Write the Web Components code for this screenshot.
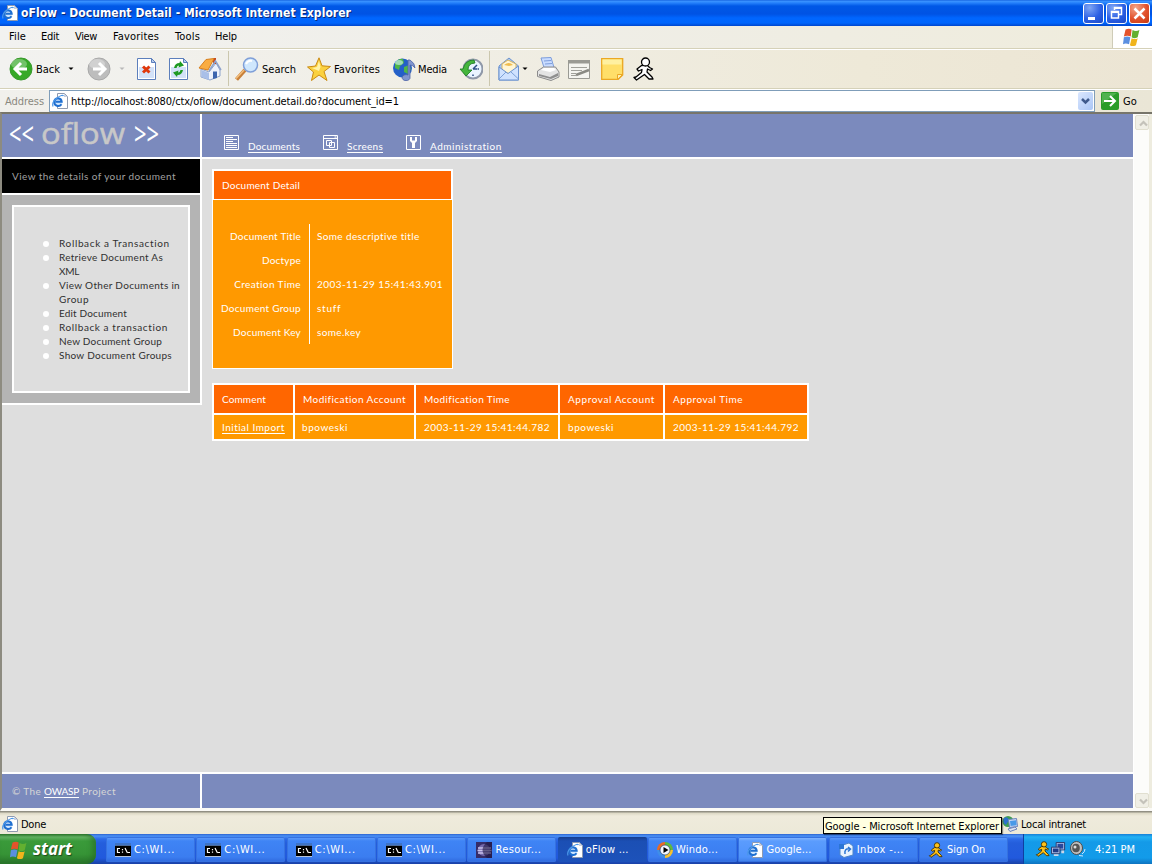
<!DOCTYPE html>
<html lang="en">
<head>
<meta charset="utf-8">
<title>oFlow - Document Detail</title>
<style>
html,body{margin:0;height:100%;overflow:hidden}
body{font:11px "DejaVu Sans Condensed","DejaVu Sans",sans-serif;font-stretch:condensed;color:#000;background:#ece9d8}
</style>
</head>
<body>
<desktop-screen></desktop-screen>
<script>
const fits = [];
function define(name, css, html) {
  const t = document.createElement('template');
  t.innerHTML = `<style>:host{display:block;box-sizing:border-box}*{box-sizing:border-box}${css}</style>${html}`;
  customElements.define(name, class extends HTMLElement {
    constructor() { super(); this.attachShadow({mode: 'open'}).append(t.content.cloneNode(true)); }
  });
}

/* Text run set to a given width: by tracking, or by stretching the glyphs. */
customElements.define('fit-text', class extends HTMLElement {
  constructor() {
    super();
    this.attachShadow({mode: 'open'}).innerHTML =
      '<style>:host{display:inline-block;white-space:pre;flex:none}span{display:inline-block;transform-origin:0 50%}:host([u]) span{text-decoration:underline;text-decoration-thickness:1px;text-underline-offset:2px;text-decoration-skip-ink:none}</style><span><slot></slot></span>';
    fits.push(this);
  }
  fit() {
    const s = this.shadowRoot.querySelector('span'), w = +this.getAttribute('w');
    const n = s.getBoundingClientRect().width;
    if (!w || !n) return;
    if (this.hasAttribute('stretch')) s.style.transform = `scaleX(${w / n})`;
    else s.style.letterSpacing = (w - n) / this.textContent.length + 'px';
    this.style.width = w + 'px';
  }
});

const circle = (a, b, c) => `<circle cx="12" cy="12" r="11" fill="${b}" stroke="${a}"/><ellipse cx="10" cy="7" rx="8" ry="5" fill="#fff" opacity=".3"/>${c}`;
const flag = '<path fill="#e4532b" d="M3 3q4-2 7 0L9 11Q5 9 1 11z"/><path fill="#63b030" d="M11 3.500q4 2 8 0L17 12q-4 2-7 0z"/><path fill="#5a8fe0" d="M1 12q4-2 7.500 0L7 20q-4-2-7 0z"/><path fill="#f0b41c" d="M10 13q4 2 7 0l-2 8q-4 2-7 0z"/>';
const sheet = '<path fill="#fff" stroke="#5c7fbc" d="M3.500 1.500h14l4 4v17h-18z"/><path fill="#d3e2f8" d="M5 10h15v11H5z"/><path fill="#b6cdf0" stroke="#5c7fbc" d="M17.500 1.500v4h4z"/>';
const iePage = '<path fill="#fff" stroke="#8f9aaf" d="M5.500.5h7l3 3v12h-10z"/><path fill="#c5cfe0" d="M12 .5v3.500h3.500z"/><circle cx="6" cy="9" r="4.300" fill="#cfe6ff"/><path fill="none" stroke="#1f6fd0" stroke-width="2" d="M9.500 11.300q-1.500 2.200-4 1.700Q2.200 12.200 2.200 9T6 5.200q3.500.2 3.700 3.600H3.500"/><path fill="none" stroke="#4b97e8" stroke-width="1.200" d="M1 13.500Q-.5 9 5 5t6.500-2"/>';
const runner = (f, s) => `<g fill="${f}" stroke="${s}" stroke-width="1.300" stroke-linejoin="round"><path d="M9.500 8.500 5 12l1.500 2 3.500-1.500-.5 3L4 20l-2 .5 2.500 2.500 8-5.500L17 22h4l-1-2-5-5 .5-3 3 1.500 2-1.500-3-1.500-2.500-2.500z"/><circle cx="13.500" cy="5" r="4"/></g>`;
const cmd = '<path fill="#b6c5dc" d="M0 1h16v14H0z"/><path d="M0 3.500h16V14H0z"/><path fill="#3e74c8" d="M0 1h16v2.500H0z"/><path d="M5 6.500H2.500v4H5M7.500 7v1.200M7.500 9.500v1.200M10 6l2.500 5M13 10.500h2" fill="none" stroke="#fff" stroke-width="1.200"/>';
const icons = {
  back: [24, circle('#3a9a2e', '#36a927', '<path d="M18 12H7m5-6-6 6 6 6" fill="none" stroke="#fff" stroke-width="3"/>')],
  fwd: [24, circle('#a9a9a9', '#bdbdbd', '<path d="M6 12h11m-5-6 6 6-6 6" fill="none" stroke="#fff" stroke-width="3"/>')],
  stop: [24, sheet + '<path d="m9 9.500 6.500 6m0-6-6.500 6" stroke="#e0380c" stroke-width="3"/>'],
  refresh: [24, sheet + '<path d="M8 11q1-5 5.500-5l.5-2 4 4.500-5.500 2 .5-2q-2 0-2.500 2.500zM17 13q-1 5-5.500 5l-.5 2-4-4.500 5.500-2-.5 2q2 0 2.500-2.500z" fill="#1e9a22"/>'],
  home: [24, '<path fill="#eef2fb" stroke="#8ea3cb" d="m3 12 8 3 7-9 4 7v6l-10 4L3 20z"/><path fill="#a9bfe8" d="m3.500 13 7.500 3v7l-7.500-3z"/><path fill="#c8481e" d="M15 1h3v6h-3z"/><path fill="#f9ac42" stroke="#d77f1e" d="M1 11 8 2.500l8-1-6 11.500z"/><path fill="none" stroke="#8ea3cb" stroke-width="1.500" d="m11 14 6.500-10 5.500 9"/><path fill="#3d65ae" d="M15 14.500h4V21l-4 1z"/>'],
  search: [24, '<path d="m10 13-8.500 9.500" stroke="#c8803a" stroke-width="4"/><path d="m9 13-8 8.500" stroke="#f3be7c" stroke-width="1.500"/><circle cx="15.500" cy="8" r="7" fill="#cfe7fd" stroke="#7f9fd8" stroke-width="1.500"/><path d="M11 7q2-4 6-3" fill="none" stroke="#fff" stroke-width="2"/>'],
  star: [24, '<path fill="#fbd13f" stroke="#ca8a13" stroke-linejoin="round" d="m12 .8 3 8 8.500.7-6.500 5 3 9L12 18l-7.500 5.500 2-8.500-6-5 8-1z"/><path fill="#fff3a8" d="m12 4 1.500 6L12 14l-7-3 5-1z"/>'],
  media: [24, '<circle cx="10.500" cy="11" r="9.500" fill="#2460c8"/><path fill="#4fb648" d="M3 6q4-5 8-4l1 4-4 3-1 4-4-2zm9 4 5-2 2 4-3 5-4-2z"/><ellipse cx="7" cy="5.500" rx="4" ry="2.500" fill="#d8f2ff" opacity=".6"/><path fill="#8095cf" stroke="#4e65a6" stroke-width=".8" d="M16 3h2q5 3 5 8-2-3-5-3v12a4 3 0 1 1-2-2z"/>'],
  history: [24, '<circle cx="14" cy="12" r="9.500" fill="#eaf4ff" stroke="#8f98a8" stroke-width="2"/><path d="M14 5v1.500M20 12h-1.500M14 19v-1.500m0-5.500 4-4m-4 4h4" stroke="#2d4f88" stroke-width="1.500"/><path fill="#45b53c" stroke="#187a20" stroke-width=".8" d="M1 12h3q2-9 11-9l1 3q-7 0-7 7h4l-6 6z"/>'],
  mail: [24, '<path fill="#a7c9f4" stroke="#6b92cf" d="m2 9 10-8 9.500 8v14H2z"/><path fill="#fff6d5" stroke="#d9b55c" d="M5 13V7l6-4 8 4v6l-7 4z"/><path fill="#f0bd4e" d="M7 8q5-4 9 0l-4 1z"/><path fill="#cfe2ff" stroke="#6b92cf" d="m2 10 9 6.500L21.500 9v14H2z"/><path fill="none" stroke="#7da2d8" d="m2 22 7-7m12.500 7L14 15"/>'],
  printer: [24, '<path fill="#c9dcff" stroke="#7d9ddb" d="m5 1 10-.5 3 10H8z"/><path stroke="#7d9ddb" d="m8 4 7-.5M9 7l7-.5"/><path fill="#e4e4e4" stroke="#8b8b8b" d="m1.500 14 6-4h12l3.500 5v5l-8 3.500-13.500-4z"/><path fill="#8f8f8f" d="m3 17 11 3 8-4v3l-7 3-12-3z"/><path fill="#fff" d="m5 13 3-2h10l2 2-6 2z"/>'],
  edit: [24, '<path fill="#f4f4f0" stroke="#9a9a94" d="M1.500 3.500h21v18h-21z"/><path fill="#9a9a94" d="M1 3h22v3.500H1z"/><path stroke="#a0a09a" d="M4 10.500h16M4 13.500h11M4 16.500h5M4 18.500h5"/><path d="m9 18 13-5" stroke="#8a8a84" stroke-width="2.500"/>'],
  note: [24, '<path fill="#ffdf69" stroke="#eba824" stroke-width="1.300" d="M1.700 1.700h21V18l-4.500 4.300H1.700z"/><path fill="#fff0a0" d="M2.500 2.500h19v5h-19z"/><path fill="#fff1b0" stroke="#eba824" d="M22.500 17.500h-5v5z"/>'],
  aim: [24, runner('#fff', '#000')],
  aimy: [24, runner('#ffc21a', '#3c2c00')],
  flag: [22, flag], ie: [16, iePage], cmd: [16, cmd],
  ball: [16, '<path fill="#362c68" d="M0 0h16v16H0z"/><circle cx="8" cy="8" r="6" fill="#7469ac"/><path stroke="#c9c2ec" stroke-width="1.300" d="M2 6h13M1.500 8.500h14M2 11h13"/><path fill="#1c1440" d="M10 0h6v16h-5q-9-8 0-16z" opacity=".6"/>'],
  wmp: [16, '<path fill="#e86a25" d="M8 0a8 8 0 0 0-8 8h8z"/><path fill="#3f8ee8" d="M0 8a8 8 0 0 0 8 8V8z"/><path fill="#5fba3c" d="M8 0a8 8 0 0 1 8 8H8z"/><path fill="#f8c32c" d="M16 8a8 8 0 0 1-8 8V8z"/><circle cx="8" cy="8" r="5" fill="#f2f6ff" stroke="#28456e" stroke-width=".7"/><path d="m6.500 5 5 3-5 3z"/>'],
  inbox: [16, '<path fill="#e8f3ff" stroke="#4f86ca" d="m2 4 9-3 4 3v9l-9 2.500L2 13z"/><path fill="#2b75d4" d="M1 2h5v5H1z"/><path stroke="#2b75d4" fill="none" stroke-width="1.500" d="M7 12q-1-6 5-5m-2-2 2.500 2L10 9.500"/>'],
  zone: [16, '<circle cx="6" cy="5.500" r="5.500" fill="#3f9d51"/><path fill="#2d70cc" d="M2 2q4-2 5 2L4 9Q0 7 2 2z"/><path fill="#c9d8f4" stroke="#6a83bc" d="m6.500 3.500 8-1 1 8-8 1z"/><path fill="#4799e8" d="m8 5 6-.7.6 5-6 .7z"/><path fill="#dde4f0" stroke="#6a83bc" d="m6 13 7-2 2 2-7 2.500z"/>'],
  net: [16, '<path fill="#a4b8e4" stroke="#29396c" d="M5.500.5h9v8h-9z"/><path fill="#27489d" d="M7 2h6v5H7z"/><path fill="#b3c2e8" stroke="#29396c" d="M.5 5.500h9v7h-9z"/><path fill="#203b86" d="M2 7h6v4H2z"/><path fill="#cdd5e6" d="M3 13h5v2H3zm8-4h3v3h-3z"/>'],
  vol: [16, '<ellipse cx="6.500" cy="7" rx="6" ry="6.500" fill="#c0c0c0" stroke="#4c4c4c"/><ellipse cx="6" cy="7" rx="3.800" ry="4.300" fill="#555"/><circle cx="5" cy="6" r="1.500" fill="#ddd"/><path stroke="#cfe5ff" fill="none" d="M12 13q3-2 3-5M9 14.500l4 .5"/>'],
  go: [18, '<rect width="18" height="18" rx="2" fill="#2a9c28"/><path fill="#6cc268" d="M1 1h15L1 12z" opacity=".6"/><path d="M3 9h10M9 4l5 5-5 5" fill="none" stroke="#fff" stroke-width="2"/>'],
  doc: [15, '<path fill="none" stroke="#fff" d="M.5.5h14v14H.5zM2 2.500h7M2 4.500h11M2 6.500h7M2 8.500h11M2 10.500h11M2 12.500h11"/>'],
  scr: [15, '<path fill="none" stroke="#fff" d="M.5.5h14v14H.5zM0 3.500h15M11.500 2h2M3.500 5.500h5v5h-5zM6.500 7.500h5v5h-5z"/>'],
  adm: [15, '<path fill="none" stroke="#fff" d="M.5.5h14v14H.5z"/><path fill="#fff" d="M4 2v4l2 2v5h3V8l2-2V2H9v3.500H6V2z"/>'],
  min: [21, '<path stroke="#fff" stroke-width="3" d="M5 15.500h7"/>'],
  max: [21, '<path fill="none" stroke="#fff" stroke-width="1.500" d="M8.500 7V4.500h7v7H13"/><path stroke="#fff" stroke-width="2" d="M8 5h8M5 9h8"/><path fill="none" stroke="#fff" stroke-width="1.500" d="M5.500 8.500h7v6.500h-7z"/>'],
  close: [21, '<path stroke="#fff" stroke-width="2.500" d="m5.500 5.500 10 10m0-10-10 10"/>'],
  down: [6, '<path d="M.5 1.500h5L3 4z"/>'], downg: [6, '<path fill="#b8b8b8" d="M.5 1.500h5L3 4z"/>'],
  chev: [15, '<path d="m4 5 3.500 3.500L11 5" fill="none" stroke="#3f5a8c" stroke-width="2.500"/>'],
  sup: [15, '<path d="m4 9.500 3.500-3.500L11 9.500" fill="none" stroke="#c4c2ba" stroke-width="2.200"/>'],
  sdn: [15, '<path d="m4 5.500 3.500 3.500L11 5.500" fill="none" stroke="#c4c2ba" stroke-width="2.200"/>']
};
customElements.define('x-icon', class extends HTMLElement {
  constructor() {
    super();
    const [n, d] = icons[this.getAttribute('name')];
    const s = +this.getAttribute('size') || n;
    this.attachShadow({mode: 'open'}).innerHTML =
      `<style>:host{display:block;flex:none;width:${s}px;height:${s}px}svg{display:block}</style><svg width="${s}" height="${s}" viewBox="0 0 ${n} ${n}">${d}</svg>`;
  }
});

define('window-title', `
 :host{height:26px;display:flex;align-items:center;padding:0 2px 0 2px;background:linear-gradient(#0b57d9,#3d95ff 1px,#2480fb 3px,#0058e6 6px,#0053e4 14px,#0066ff 18px,#0065fc 23px,#0046cd 26px);color:#fff}
 b{flex:1;font:bold 12px/27px "DejaVu Sans Condensed";font-stretch:condensed;padding-left:3px;text-shadow:1px 1px #0a2a78}
 i{width:21px;height:21px;margin-left:2px;border:1px solid #fff;border-radius:3px;background:radial-gradient(circle at 30% 20%,#7fa6f4,#2c60e4 55%,#1c49c6);display:flex;align-items:center;justify-content:center}
 i:last-child{background:radial-gradient(circle at 30% 20%,#f2a588,#e2512b 55%,#c63a12)}`,
 `<x-icon name="ie"></x-icon><b><fit-text w="330">oFlow - Document Detail - Microsoft Internet Explorer</fit-text></b>
 <i><x-icon name="min"></x-icon></i><i><x-icon name="max"></x-icon></i><i><x-icon name="close"></x-icon></i>`);

define('menu-bar', `
 :host{height:24px;display:flex;line-height:21px;padding-left:9px;background:linear-gradient(90deg,#f2f2f0,#efeee8 45%,#efecdc);border-bottom:1px solid #fff;box-shadow:inset 0 -1px #d5d1b8}
 fit-text{margin-right:var(--g)}
 div{margin-left:auto;width:40px;height:22px;background:#fff;border-left:1px solid #cfccb8;padding:1px 0 0 10px}`,
 `<fit-text w="17" style="--g:15px">File</fit-text><fit-text w="18" style="--g:16px">Edit</fit-text><fit-text w="22" style="--g:16px">View</fit-text><fit-text w="46" style="--g:16px">Favorites</fit-text><fit-text w="25" style="--g:15px">Tools</fit-text><fit-text w="22">Help</fit-text><div><x-icon name="flag" size="19"></x-icon></div>`);

define('tool-bar', `
 :host{height:40px;display:flex;align-items:center;padding:0 0 2px 9px;background:linear-gradient(90deg,#f2f2f0,#f0eee5 40%,#eee9d8 75%,#ece5d4);border-bottom:1px solid #fff;box-shadow:inset 0 -1px #d5d1b8}
 x-icon,fit-text,hr{margin:0 0 0 var(--g,0)}fit-text{padding-top:1px}
 hr{width:1px;height:35px;border:0;background:#cbc7ae;flex:none}`,
 `<x-icon name="back"></x-icon><fit-text w="24" style="--g:3px">Back</fit-text><x-icon name="down" style="--g:8px"></x-icon>
 <x-icon name="fwd" style="--g:13px"></x-icon><x-icon name="downg" style="--g:8px"></x-icon>
 <x-icon name="stop" style="--g:9px"></x-icon><x-icon name="refresh" style="--g:8px"></x-icon><x-icon name="home" style="--g:8px"></x-icon>
 <hr style="--g:6px"><x-icon name="search" style="--g:6px"></x-icon><fit-text w="34" style="--g:3px">Search</fit-text>
 <x-icon name="star" style="--g:11px"></x-icon><fit-text w="46" style="--g:3px">Favorites</fit-text>
 <x-icon name="media" style="--g:12px"></x-icon><fit-text w="29" style="--g:2px">Media</fit-text>
 <x-icon name="history" style="--g:12px"></x-icon><hr style="--g:6px">
 <x-icon name="mail" style="--g:7px"></x-icon><x-icon name="down" style="--g:1px"></x-icon><x-icon name="printer" style="--g:8px"></x-icon>
 <x-icon name="edit" style="--g:7px"></x-icon><x-icon name="note" style="--g:9px"></x-icon><x-icon name="aim" style="--g:8px"></x-icon>`);

define('address-bar', `
 :host{height:22px;display:flex;background:linear-gradient(90deg,#f1f0ec,#eae6d6);line-height:23px}
 .l{color:#8a887e;padding-left:5px;width:49px}
 .b{width:1046px;height:22px;border:1px solid #7f9db9;background:#fff;display:flex;align-items:center}
 .b fit-text{margin-left:3px;padding-top:1px}.c{margin:0 1px 0 auto;width:15px;height:18px;border-radius:2px;background:linear-gradient(135deg,#dbe7fe,#aac6f6);padding-top:2px}
 .g{margin:2px 3px 0 6px}`,
 `<div class="l"><fit-text w="39">Address</fit-text></div><div class="b"><x-icon name="ie" style="margin-left:2px"></x-icon><fit-text w="328">http://localhost:8080/ctx/oflow/document.detail.do?document_id=1</fit-text><div class="c"><x-icon name="chev"></x-icon></div></div><x-icon class="g" name="go"></x-icon><fit-text w="14" style="margin-left:1px">Go</fit-text>`);

define('oflow-logo', `
 :host{width:198px;height:43px;display:flex;padding-left:7px;color:#fff;font:30px/40px "Noto Sans",sans-serif}
 .n{font-size:30px;line-height:37px;color:#c8c8c8;font-family:"Open Sans",sans-serif;margin:0 9px 0 7px;-webkit-text-stroke:.5px #c8c8c8}`,
 `<fit-text w="25" stretch>&lt;&lt;</fit-text><fit-text class="n" w="84" stretch>oflow</fit-text><fit-text w="25" stretch>&gt;&gt;</fit-text>`);

define('nav-link', `
 :host{display:flex;align-items:flex-start}
 span{margin:3px 0 0 9px;line-height:16px}`,
 `<slot name="icon"></slot><span><slot></slot></span>`);

define('page-header', `
 :host{height:45px;display:flex;background:#7b8abd;border-bottom:2px solid #fff;color:#fff}
 nav{flex:1;border-left:2px solid #fff;display:flex;padding:21px 0 0 22px}`,
 `<oflow-logo></oflow-logo><nav>
 <nav-link><x-icon slot="icon" name="doc"></x-icon><fit-text u w="52">Documents</fit-text></nav-link>
 <nav-link style="margin-left:23px"><x-icon slot="icon" name="scr"></x-icon><fit-text u w="36">Screens</fit-text></nav-link>
 <nav-link style="margin-left:23px"><x-icon slot="icon" name="adm"></x-icon><fit-text u w="72">Administration</fit-text></nav-link></nav>`);

define('side-panel', `
 :host{width:200px;height:246px;border-right:2px solid #fff;border-bottom:2px solid #fff;background:#b4b4b4;flex:none}
 p{margin:0;height:36px;background:#000;border-bottom:2px solid #fff;color:#a0a0a0;line-height:35px;padding-left:10px}
 .x{margin:10px 10px 0;height:188px;border:2px solid #fff;background:#dedede;padding:29px 0 0 45px;color:#303030}
 ul{margin:0;padding:0;list-style:none}li{display:flex;flex-direction:column;align-items:flex-start;line-height:14px;position:relative}
 li::before{content:"";position:absolute;left:-16px;top:5px;width:6px;height:6px;border-radius:3px;background:#fff}`,
 `<p><fit-text w="164">View the details of your document</fit-text></p><div class="x"><ul>
 <li><fit-text w="111">Rollback a Transaction</fit-text></li>
 <li><fit-text w="104">Retrieve Document As</fit-text><fit-text w="20">XML</fit-text></li>
 <li><fit-text w="121">View Other Documents in</fit-text><fit-text w="30">Group</fit-text></li>
 <li><fit-text w="68">Edit Document</fit-text></li><li><fit-text w="109">Rollback a transaction</fit-text></li>
 <li><fit-text w="103">New Document Group</fit-text></li><li><fit-text w="113">Show Document Groups</fit-text></li></ul></div>`);

define('detail-card', `
 :host{width:241px;height:200px;background:#fff;color:#fff;display:flex;flex-direction:column}
 h1{font:inherit;margin:2px 2px 1px;height:28px;background:#f60;line-height:29px;padding-left:8px}
 dl{margin:0 1px;flex:none;height:168px;background:#f90;padding:24px 0;display:grid;grid-template-columns:97px 1fr;grid-auto-rows:24px;line-height:25px}
 dt{text-align:right;padding-right:8px;border-right:1px solid #fff}dd{margin:0;padding-left:7px}`,
 `<h1><fit-text w="78">Document Detail</fit-text></h1><dl>
 <dt><fit-text w="71">Document Title</fit-text></dt><dd><fit-text w="103">Some descriptive title</fit-text></dd>
 <dt><fit-text w="39">Doctype</fit-text></dt><dd></dd>
 <dt><fit-text w="67">Creation Time</fit-text></dt><dd><fit-text w="126">2003-11-29 15:41:43.901</fit-text></dd>
 <dt><fit-text w="80">Document Group</fit-text></dt><dd><fit-text w="24">stuff</fit-text></dd>
 <dt><fit-text w="68">Document Key</fit-text></dt><dd><fit-text w="44">some.key</fit-text></dd></dl>`);

define('history-table', `
 :host{margin-top:14px;width:597px;height:58px;padding:2px;background:#fff;color:#fff;display:grid;grid-template-columns:79px 119px 142px 103px 142px;grid-template-rows:28px 24px;gap:2px}
 div{background:#f90;padding-left:8px;line-height:25px}.h{background:#f60;line-height:29px}`,
 `<div class="h"><fit-text w="44">Comment</fit-text></div><div class="h"><fit-text w="103">Modification Account</fit-text></div><div class="h"><fit-text w="86">Modification Time</fit-text></div><div class="h"><fit-text w="87">Approval Account</fit-text></div><div class="h"><fit-text w="70">Approval Time</fit-text></div>
 <div><fit-text u w="63">Initial Import</fit-text></div><div style="padding-left:7px"><fit-text w="46">bpoweski</fit-text></div><div><fit-text w="126">2003-11-29 15:41:44.782</fit-text></div><div><fit-text w="46">bpoweski</fit-text></div><div><fit-text w="126">2003-11-29 15:41:44.792</fit-text></div>`);

define('page-footer', `
 :host{height:36px;display:flex;background:#7b8abd;border-top:2px solid #fff;color:#d6d6d6;line-height:35px}
 div{width:200px;border-right:2px solid #fff;padding-left:10px;white-space:nowrap}fit-text[u]{color:#fff}`,
 `<div><fit-text w="32">© The </fit-text><fit-text u w="35">OWASP</fit-text><fit-text w="37"> Project</fit-text></div>`);

define('scroll-bar', `
 :host{width:18px;background:#fcfcfa;border-right:3px solid #eeecdf;display:flex;flex-direction:column;justify-content:space-between;padding:1px 0 0}
 i{height:15px;width:14px;margin-left:1px;background:#f0efe6;border:1px solid #e1dfd0;border-radius:2px;display:grid;place-items:center}`,
 `<i><x-icon name="sup"></x-icon></i><i><x-icon name="sdn"></x-icon></i>`);

define('page-view', `
 :host{height:699px;display:flex;border-top:2px solid #77756a;border-left:2px solid #8d8b80;border-bottom:3px solid #fbfaf6;font:10px Lato,"Noto Sans",sans-serif;font-stretch:normal}
 .p{width:1132px;display:flex;flex-direction:column;background:#dedede;border-right:1px solid #fff}.m{flex:1;display:flex}.c{padding:10px 0 0 10px}`,
 `<div class="p"><page-header></page-header><div class="m"><side-panel></side-panel><div class="c"><detail-card></detail-card><history-table></history-table></div></div><page-footer></page-footer></div><scroll-bar></scroll-bar>`);

define('status-bar', `
 :host{height:23px;display:flex;align-items:center;background:linear-gradient(#918f83 1px,#dcd8c4 2px,#efebdc 5px,#ece9d8);padding:2px 0 0 2px;position:relative}
 .t{position:absolute;left:823px;top:6px;height:17px;width:179px;border:1px solid #000;background:#ffffe1;line-height:17px;padding-left:1px;box-shadow:1px 1px 1px #0006;z-index:2}
 .z{margin-left:auto;width:150px;display:flex;align-items:center}.z fit-text{margin-left:3px}`,
 `<x-icon name="ie"></x-icon><fit-text w="25" style="margin:1px 0 0 3px">Done</fit-text><div class="z"><x-icon name="zone"></x-icon><fit-text w="65" style="margin-top:1px">Local intranet</fit-text></div>
 <div class="t"><fit-text w="174">Google - Microsoft Internet Explorer</fit-text></div>`);

define('task-button', `
 :host{width:89px;height:25px;margin:3px 1.350px 0 0;display:flex;align-items:center;padding-left:9px;border-radius:2px;background:linear-gradient(#64a0fa,#3f84f5 4px,#3b7df0 20px,#2f69dd);color:#fff;box-shadow:inset 0 0 0 1px #3672e0;flex:none}
 :host([active]){background:linear-gradient(#153d8d,#1b4fb4 4px,#1d52ba);box-shadow:none}
 :host([hot]){background:linear-gradient(#8dbcff,#5b9cfd 4px,#4f93fb 20px,#3f7fe8)}
 span{margin-left:3px;line-height:25px}`,
 `<slot name="icon"></slot><span><slot></slot></span>`);

define('task-bar', `
 :host{height:30px;display:flex;background:linear-gradient(#2b63cf,#4c92f4 2px,#2c6ae8 5px,#245edc 9px,#2159dd 24px,#1941a5);color:#fff}
 .s{width:96px;height:30px;margin-right:10px;border-radius:0 9px 9px 0;background:linear-gradient(#2d7a2e,#64b464 3px,#3a9a3a 7px,#369436 20px,#2b7a2c 28px);box-shadow:inset -4px 0 5px #23662488;display:flex;align-items:center;padding-left:10px;font:italic bold 17px/27px "Open Sans",sans-serif;text-shadow:1px 1px 1px #1b4a1b}
 .s fit-text{margin:-2px 0 0 4px}
 .t{margin-left:auto;width:129px;background:linear-gradient(#1580d8,#22b2f4 3px,#149ae8 8px,#129be9 24px,#0e74c0);border-left:1px solid #0f3fa0;display:flex;align-items:center;padding-left:11px}
 .t fit-text{margin-left:9px}`,
 `<div class="s"><x-icon name="flag" size="19"></x-icon><fit-text w="39">start</fit-text></div>
 ${'<task-button><x-icon slot="icon" name="cmd"></x-icon><fit-text w="41">C:\\WI...</fit-text></task-button>'.repeat(4)}
 <task-button><x-icon slot="icon" name="ball"></x-icon><fit-text w="46">Resour...</fit-text></task-button>
 <task-button active><x-icon slot="icon" name="ie"></x-icon><fit-text w="43">oFlow ...</fit-text></task-button>
 <task-button><x-icon slot="icon" name="wmp"></x-icon><fit-text w="42">Windo...</fit-text></task-button>
 <task-button hot><x-icon slot="icon" name="ie"></x-icon><fit-text w="45">Google...</fit-text></task-button>
 <task-button><x-icon slot="icon" name="inbox"></x-icon><fit-text w="47">Inbox -...</fit-text></task-button>
 <task-button><x-icon slot="icon" name="aimy" size="16"></x-icon><fit-text w="38">Sign On</fit-text></task-button>
 <div class="t"><x-icon name="aimy" size="16"></x-icon><x-icon name="net" size="15"></x-icon><x-icon name="vol" size="16" style="margin-left:4px"></x-icon><fit-text w="40">4:21 PM</fit-text></div>`);

define('desktop-screen', ':host{width:1152px;height:864px;overflow:hidden}',
 `<window-title></window-title><menu-bar></menu-bar><tool-bar></tool-bar><address-bar></address-bar><page-view></page-view><status-bar></status-bar><task-bar></task-bar>`);

fits.forEach(f => f.fit());
</script>
</body>
</html>
